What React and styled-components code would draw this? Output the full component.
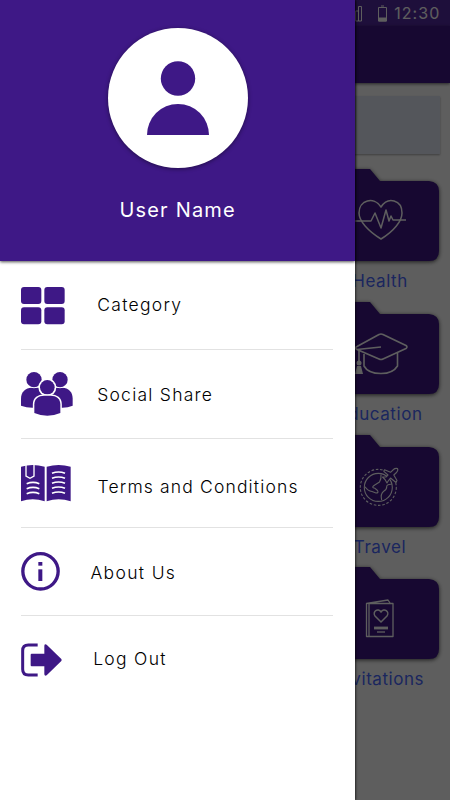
import React from 'react';
import styled, { createGlobalStyle } from 'styled-components';

const purple = '#3e1886';

const GlobalStyle = createGlobalStyle`
  body {
    margin: 0;
    font-family: Inter, "Liberation Sans", sans-serif;
  }
`;

const Screen = styled.div`
  position: relative;
  width: 450px;
  height: 800px;
  overflow: hidden;
  background-color: #fff;
`;

const Page = styled.div`
  display: flex;
  flex-direction: column;
  height: 100%;
`;

const StatusBar = styled.div`
  display: flex;
  align-items: center;
  justify-content: flex-end;
  height: 26px;
  padding-right: 9.5px;
  color: #fff;
  background-color: #53299f;
`;

const Clock = styled.span`
  margin-left: 7px;
  font-size: 16px;
  line-height: 26px;
  letter-spacing: 1.1px;
`;

const AppBar = styled.div`
  height: 57px;
  background-color: ${purple};
  box-shadow: 0 1px 3px rgba(0, 0, 0, 0.6);
`;

const SearchBox = styled.div`
  flex: none;
  height: 58px;
  margin: 13px 10px 15px;
  background-color: #e5e9f7;
  box-shadow: 0 1px 2px rgba(0, 0, 0, 0.35);
`;

const Folders = styled.div`
  display: flex;
  flex-direction: column;
  align-items: flex-end;
  padding-right: 10px;
`;

const Folder = styled.div`
  display: flex;
  flex-direction: column;
  align-items: center;
  width: 120px;
  height: ${props => props.height || 133}px;
`;

const FolderLabel = styled.div`
  margin-top: 9px;
  color: #4a68ff;
  font-size: 17px;
  line-height: 22px;
  letter-spacing: 0.55px;
`;

const FolderArt = styled.svg`
  display: block;
  flex: none;
  overflow: visible;
  filter: drop-shadow(0 1px 2px rgba(0, 0, 0, 0.7));
`;

const Shade = styled.div`
  position: absolute;
  inset: 0;
  background-color: rgba(0, 0, 0, 0.63);
`;

const Drawer = styled.div`
  position: absolute;
  top: 0;
  left: 0;
  width: 355.4px;
  height: 800px;
  background-color: #fff;
  box-shadow: 1px 0 2px rgba(0, 0, 0, 0.6);
`;

const Profile = styled.div`
  display: flex;
  flex-direction: column;
  align-items: center;
  box-sizing: border-box;
  height: 261px;
  padding-top: 28px;
  background-color: ${purple};
  box-shadow: 0 1px 3px rgba(0, 0, 0, 0.7);
`;

const Avatar = styled.div`
  width: 140px;
  height: 140px;
  margin: 0.4px 0 0.6px 0.8px;
  border-radius: 50%;
  background-color: #fff;
  box-shadow: 0 1px 4px rgba(0, 0, 0, 0.45);

  svg {
    display: block;
  }
`;

const UserName = styled.div`
  margin-top: 28px;
  color: #fff;
  font-size: 20px;
  line-height: 26px;
  letter-spacing: 1.2px;
`;

const Menu = styled.div`
  padding: 0 22px 0 20.6px;
`;

const Item = styled.div`
  display: flex;
  align-items: flex-start;
  box-sizing: border-box;
  height: ${props => props.height}px;
  border-bottom: ${props => (props.last ? 'none' : '1px solid #e2e2e2')};
`;

const ItemIcon = styled.div`
  flex: none;
  width: ${props => props.width}px;
  padding-top: ${props => props.top}px;

  svg {
    display: block;
    fill: ${purple};
  }
`;

const ItemLabel = styled.div`
  padding-top: ${props => props.top}px;
  color: #000;
  font-size: 17.5px;
  font-weight: 300;
  line-height: 24px;
  letter-spacing: ${props => props.spacing}px;
  white-space: nowrap;
`;

const CategoryIcon = () => (
  <svg width="44" height="38" viewBox="62 111 132 114">
    <rect x="62" y="111" width="61" height="51" rx="9" />
    <rect x="132" y="111" width="61" height="51" rx="9" />
    <rect x="62" y="172" width="61" height="51" rx="9" />
    <rect x="132" y="172" width="61" height="51" rx="9" />
  </svg>
);

const PeopleIcon = () => (
  <svg width="52" height="44" viewBox="62 366 156 132">
    <path d="M62 467V446C62 425 76 413 94 413H186C204 413 217 425 217 446V467Q203 473 186 473H96Q78 473 62 467Z" />
    <circle cx="101" cy="389" r="23" stroke="#fff" strokeWidth="5" paintOrder="stroke" />
    <circle cx="179" cy="389" r="23" stroke="#fff" strokeWidth="5" paintOrder="stroke" />
    <circle cx="141" cy="412" r="22" stroke="#fff" strokeWidth="10" paintOrder="stroke" />
    <path
      d="M102 489V463C102 446 115 437 131 437H151C168 437 180 446 180 463V489Q162 497 141 497Q120 497 102 489Z"
      stroke="#fff"
      strokeWidth="9"
      paintOrder="stroke"
    />
  </svg>
);

const BookIcon = () => (
  <svg width="50" height="37" viewBox="62 104 150 111">
    <path d="M62 109Q97 99 133 109V213Q97 201 62 213Z" />
    <path d="M139 109Q175 99 211 109V213Q175 201 139 213Z" />
    <g fill="none" stroke="#fff" strokeWidth="4">
      <path d="M77 103V137L89 144L101 137V103" />
      <path d="M79 160Q98 152 117 160M79 175Q98 167 117 175M79 190Q98 182 117 190" strokeWidth="5" />
      <path
        d="M155 129Q175 121 194 129M155 144Q175 136 194 144M155 159Q175 151 194 159M155 174Q175 166 194 174M155 189Q175 181 194 189"
        strokeWidth="5"
      />
    </g>
  </svg>
);

const InfoIcon = () => (
  <svg width="39" height="39" viewBox="62 52 117 117">
    <circle cx="120.500" cy="110" r="53" fill="none" stroke={purple} strokeWidth="10" />
    <rect x="114" y="82" width="12" height="11" />
    <rect x="114" y="104" width="12" height="35" />
  </svg>
);

const LogoutIcon = () => (
  <svg width="41" height="34" viewBox="62 325 123 102">
    <path d="M112 331H84Q67 331 67 348V404Q67 421 84 421H112" fill="none" stroke={purple} strokeWidth="9" />
    <path d="M94 357H132V333Q133 326 139 330L183 373Q185 376 183 379L139 422Q133 426 132 419V395H94Q91 395 91 392V360Q91 357 94 357Z" />
  </svg>
);

const items = [
  { label: 'Category', Icon: CategoryIcon, height: 89, iconTop: 26, labelTop: 32, gutter: 76.6, spacing: 1.3 },
  { label: 'Social Share', Icon: PeopleIcon, height: 89, iconTop: 22, labelTop: 33, gutter: 76.6, spacing: 1.25 },
  { label: 'Terms and Conditions', Icon: BookIcon, height: 89, iconTop: 26, labelTop: 36, gutter: 77, spacing: 1.15 },
  { label: 'About Us', Icon: InfoIcon, height: 88, iconTop: 24, labelTop: 33, gutter: 69.8, spacing: 1.35 },
  { label: 'Log Out', Icon: LogoutIcon, height: 88, iconTop: 27, labelTop: 31, gutter: 72.6, spacing: 1.3 },
];

const HealthArt = () => (
  <>
    <path d="M61 70C48 62 39 52 39 44C39 31 54 27 61 38C68 27 82 31 82 44C82 52 74 62 61 70Z" />
    <path d="M30 52H51L55 44L61 59L66 41L69 52L71 47L73 51H86" />
  </>
);

const EducationArt = () => (
  <>
    <path d="M37 44.500L59 32.500Q61 31.500 63 32.500L86 43.500Q88 45 86 46.500L63 57Q61 58 59 57L37 47.500Q34 46 37 44.500M37 47.500L61 45" />
    <path d="M44 52V64Q48 71.500 61 71.500Q73 71.500 77.500 64V51" />
    <path d="M39 48V60" />
    <circle cx="39" cy="61" r="2.500" fill="#fff" stroke="none" />
    <path d="M37 64H41L43 72H35Z" fill="#fff" stroke="none" />
  </>
);

const TravelArt = () => (
  <>
    <circle cx="58.300" cy="52.400" r="18" strokeDasharray="2.600 1.700" />
    <circle cx="58.300" cy="52.400" r="14" />
    <path d="M45 51.700Q48 56 52 56.500L56 58Q59 58 57.500 55.500L55 53.300Q51 52.500 54 50.500L59.500 47Q61.500 44 61 39.500" />
    <path d="M71.700 49.300Q67 49 66.700 51.500Q67 54 64 56Q60 59 61.700 65" />
    <path
      d="M77.500 33.500Q75 33 73.500 34.500L70.500 37.300L64.500 34.800L63.800 36.300L68 40L66 42L62.500 42L65 44.500L67 48L68.500 45.500L70.500 43L76 47.500L77 45.500L73.800 40L76.500 37.500Q78.500 35 77.500 33.500Z"
      fill={purple}
    />
  </>
);

const InvitationArt = () => (
  <>
    <path d="M48.500 36.500H73V69.500H46.500V36.500L68 33L70 36M49 36.500V69" strokeWidth="1.300" />
    <path d="M61 55L55 49C52 45 58 40 61 45C64 40 70 45 67 49Z" />
    <path d="M54 61H68" strokeWidth="2.800" />
    <path d="M57 65H65" strokeWidth="1.300" />
  </>
);

const folders = [
  { label: 'Health', Art: HealthArt, stroke: 1.5 },
  { label: 'Education', Art: EducationArt, stroke: 1.6 },
  { label: 'Travel', Art: TravelArt, stroke: 1.1, height: 132 },
  { label: 'Invitations', Art: InvitationArt, stroke: 1.5 },
];

export default function App() {
  return (
    <Screen>
      <GlobalStyle />
      <Page>
        <StatusBar>
          <svg width="33" height="18" viewBox="0 0 33 18" fill="none" stroke="#fff">
            <path d="M1.500 17V7H4.500V17ZM4.500 17V2.500H7.500V17Z" />
            <path d="M24.500 3.500H32.500V17H24.500ZM27 2H30" />
            <path d="M24.500 14H32.500V17H24.500Z" fill="#fff" />
          </svg>
          <Clock>12:30</Clock>
        </StatusBar>
        <AppBar />
        <SearchBox />
        <Folders>
          {folders.map(({ label, Art, stroke, height }) => (
            <Folder key={label} height={height}>
              <FolderArt width="120" height="92" viewBox="0 0 120 92">
                <path d="M9 0H50L60 12H109Q119 13 119 22V82Q119 92 109 92H10Q0 92 0 82V10Q0 0 9 0Z" fill={purple} />
                <g fill="none" stroke="#fff" strokeWidth={stroke} strokeLinejoin="round">
                  <Art />
                </g>
              </FolderArt>
              <FolderLabel>{label}</FolderLabel>
            </Folder>
          ))}
        </Folders>
      </Page>
      <Shade />
      <Drawer>
        <Profile>
          <Avatar>
            <svg width="140" height="140" viewBox="0 0 140 140" fill={purple}>
              <circle cx="70" cy="50.500" r="17.200" />
              <path d="M39 107A31 31 0 0 1 101 107Z" />
            </svg>
          </Avatar>
          <UserName>User Name</UserName>
        </Profile>
        <Menu>
          {items.map(({ label, Icon, height, iconTop, labelTop, gutter, spacing }, i) => (
            <Item key={label} height={height} last={i === items.length - 1 ? 1 : 0}>
              <ItemIcon width={gutter} top={iconTop}>
                <Icon />
              </ItemIcon>
              <ItemLabel top={labelTop} spacing={spacing}>{label}</ItemLabel>
            </Item>
          ))}
        </Menu>
      </Drawer>
    </Screen>
  );
}
